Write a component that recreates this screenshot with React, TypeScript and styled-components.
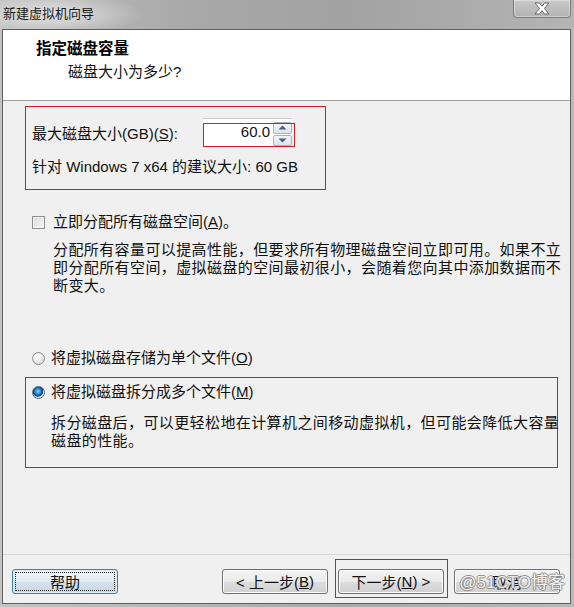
import styled, { createGlobalStyle } from "styled-components";

const GlobalStyle = createGlobalStyle`
  html, body {
    margin: 0;
    padding: 0;
    background: #b9b9b9;
  }
  body {
    font-family: "Liberation Sans", "Noto Sans CJK SC", sans-serif;
    color: #111;
  }
`;

export default function App() {
  return (
    <Window>
      <GlobalStyle />
      <TitleBar>
        <TitleText>新建虚拟机向导</TitleText>
        <CloseButton>
          <svg width="20" height="13" viewBox="0 0 20 13">
            <path
              d="M3 1 H7.5 L10 4.3 L12.5 1 H17 L12.4 6.5 L17 12 H12.5 L10 8.7 L7.5 12 H3 L7.6 6.5 Z"
              fill="#fff"
              stroke="#6a6a6a"
              strokeWidth="1"
              strokeLinejoin="round"
            />
          </svg>
        </CloseButton>
      </TitleBar>
      <Client>
        <Header>
          <HeaderTitle>指定磁盘容量</HeaderTitle>
          <HeaderSub>磁盘大小为多少?</HeaderSub>
        </Header>
        <Body>
          <MarkedBox>
            <SizeRow>
              <SizeLabel>
                最大磁盘大小(GB)(<u>S</u>):
              </SizeLabel>
              <SpinBox>
                <SpinValue>60.0</SpinValue>
                <SpinButtons>
                  <SpinButton>
                    <svg width="9" height="5" viewBox="0 0 9 5">
                      <path d="M0.5 4.5 L4.5 0.5 L8.5 4.5 Z" fill="#4d5b86" />
                    </svg>
                  </SpinButton>
                  <SpinButton>
                    <svg width="9" height="5" viewBox="0 0 9 5">
                      <path d="M0.5 0.5 L4.5 4.5 L8.5 0.5 Z" fill="#4d5b86" />
                    </svg>
                  </SpinButton>
                </SpinButtons>
                <Mark $top={4} $right={-3} $bottom={0} $left={0} />
              </SpinBox>
            </SizeRow>
            <Line>针对 Windows 7 x64 的建议大小: 60 GB</Line>
          </MarkedBox>

          <OptionRow $top={23} $left={7} $gap={8}>
            <CheckBox />
            <span>
              立即分配所有磁盘空间(<u>A</u>)。
            </span>
          </OptionRow>
          <Desc $top={10} $left={28}>
            <span>分配所有容量可以提高性能，但要求所有物理磁盘空间立即可用。如果不立</span>
            <span>即分配所有空间，虚拟磁盘的空间最初很小，会随着您向其中添加数据而不</span>
            <span>断变大。</span>
          </Desc>

          <OptionRow $top={54} $left={7} $gap={6}>
            <Radio />
            <span>
              将虚拟磁盘存储为单个文件(<u>O</u>)
            </span>
          </OptionRow>

          <SplitBox>
            <OptionRow $top={0} $left={6} $gap={6}>
              <Radio $checked />
              <span>
                将虚拟磁盘拆分成多个文件(<u>M</u>)
              </span>
            </OptionRow>
            <Desc $top={13} $left={25}>
              <span>拆分磁盘后，可以更轻松地在计算机之间移动虚拟机，但可能会降低大容量</span>
              <span>磁盘的性能。</span>
            </Desc>
          </SplitBox>
        </Body>
        <Footer>
          <Button $focused>
            <FocusRing />
            帮助
          </Button>
          <Spacer />
          <Button>
            &lt; 上一步(<u>B</u>)
          </Button>
          <NextWrap>
            <Button>
              下一步(<u>N</u>) &gt;
            </Button>
            <Mark $top={-10} $right={-4} $bottom={-4} $left={-3} />
          </NextWrap>
          <Button>取消</Button>
        </Footer>
      </Client>
      <Watermark>@51CTO博客</Watermark>
    </Window>
  );
}

const Window = styled.div`
  position: relative;
  width: 574px;
  height: 607px;
  display: flex;
  flex-direction: column;
  background: linear-gradient(90deg, #c3c3c3 0%, #b2b2b2 40%, #aaaaaa 60%, #b9b9b9 100%);
  overflow: hidden;
`;

const TitleBar = styled.div`
  height: 29px;
  display: flex;
  align-items: flex-start;
  background:
    radial-gradient(ellipse 95px 22px at 48px 14px, rgba(235, 235, 235, 0.85), rgba(235, 235, 235, 0) 100%),
    linear-gradient(90deg, #bdbdbd 0%, #a8a8a8 35%, #a2a2a2 60%, #b4b4b4 100%);
`;

const TitleText = styled.div`
  padding-left: 3px;
  line-height: 27px;
  font-size: 13px;
  color: #1a1a1a;
`;

const CloseButton = styled.div`
  margin-left: auto;
  margin-right: 3px;
  width: 58px;
  height: 18px;
  box-sizing: border-box;
  border: 1px solid #7d7d7d;
  border-top: none;
  border-radius: 0 0 4px 4px;
  background: linear-gradient(#c9c9c9, #bdbdbd 50%, #b3b3b3);
  box-shadow: inset 0 0 0 1px rgba(255, 255, 255, 0.35);
  display: flex;
  align-items: center;
  justify-content: center;
`;

const Client = styled.div`
  flex: 1;
  margin: 0 3px 3px 2px;
  border: 1px solid #5e5e5e;
  background: #f0f0f0;
  display: flex;
  flex-direction: column;
`;

const Header = styled.div`
  height: 71px;
  box-sizing: border-box;
  background: #fff;
  border-bottom: 1px solid #a0a0a0;
  padding: 10px 0 0 33px;
`;

const HeaderTitle = styled.div`
  font-size: 15.5px;
  line-height: 18px;
  font-weight: bold;
  color: #000;
`;

const HeaderSub = styled.div`
  margin: 5px 0 0 32px;
  font-size: 15px;
  line-height: 18px;
`;

const Body = styled.div`
  flex: 1;
  padding: 5px 0 0 22px;
  font-size: 15px;
  line-height: 18px;
  display: flex;
  flex-direction: column;
  align-items: flex-start;
`;

const MarkedBox = styled.div`
  width: 301px;
  height: 84px;
  box-sizing: border-box;
  border: 1px solid #d41c26;
  padding: 11px 0 0 6px;
`;

const SizeRow = styled.div`
  display: flex;
  align-items: center;
  height: 29px;
`;

const SizeLabel = styled.div`
  width: 171px;
  padding-top: 3px;
`;

const SpinBox = styled.div`
  position: relative;
  width: 89px;
  height: 29px;
  box-sizing: border-box;
  border-top: 1px solid #c8c8c8;
  display: flex;
  align-items: stretch;
  background: #fff;
`;

const SpinValue = styled.div`
  flex: 1;
  text-align: right;
  padding: 4px 3px 0 0;
  font-size: 15px;
  line-height: 18px;
`;

const SpinButtons = styled.div`
  width: 19px;
  padding: 3px 0 1px;
  display: flex;
  flex-direction: column;
  gap: 1px;
`;

const SpinButton = styled.div`
  flex: 1;
  border: 1px solid #a9b1c2;
  border-radius: 2px;
  background: linear-gradient(#f4f6fa, #dde3ec);
  display: flex;
  align-items: center;
  justify-content: center;
`;

const Mark = styled.div<{ $top: number; $right: number; $bottom: number; $left: number }>`
  position: absolute;
  top: ${(p) => p.$top}px;
  right: ${(p) => p.$right}px;
  bottom: ${(p) => p.$bottom}px;
  left: ${(p) => p.$left}px;
  border: 1px solid #d41c26;
  pointer-events: none;
`;

const Line = styled.div`
  margin-top: 11px;
`;

const OptionRow = styled.div<{ $top: number; $left: number; $gap: number }>`
  margin: ${(p) => p.$top}px 0 0 ${(p) => p.$left}px;
  display: flex;
  align-items: center;
  gap: ${(p) => p.$gap}px;
`;

const CheckBox = styled.div`
  width: 13px;
  height: 13px;
  box-sizing: border-box;
  border: 1px solid #8e8f8f;
  background: linear-gradient(135deg, #dcdcdc, #f6f6f6);
  box-shadow: inset 0 0 0 1px #f4f4f4;
`;

const Radio = styled.div<{ $checked?: boolean }>`
  width: 13px;
  height: 13px;
  box-sizing: border-box;
  border-radius: 50%;
  border: 1px solid ${(p) => (p.$checked ? "#4d6278" : "#8e8f8f")};
  background: ${(p) =>
    p.$checked
      ? "radial-gradient(circle at 45% 40%, #8fd2ff 0%, #1f7fc4 35%, #0d3e66 55%, #e9eef2 62%, #cfd5db 100%)"
      : "radial-gradient(circle at 40% 35%, #ffffff 0%, #e6e6e6 55%, #c7c7c7 100%)"};
`;

const Desc = styled.div<{ $top: number; $left: number }>`
  margin: ${(p) => p.$top}px 0 0 ${(p) => p.$left}px;
  line-height: 18px;
  letter-spacing: 0.4px;
  display: flex;
  flex-direction: column;
  white-space: nowrap;
`;

const SplitBox = styled.div`
  margin-top: 10px;
  width: 533px;
  height: 91px;
  box-sizing: border-box;
  border: 1px solid #d41c26;
  padding-top: 5px;
`;

const Footer = styled.div`
  border-top: 1px solid #d8d8d8;
  padding: 14px 10px 9px 9px;
  display: flex;
  align-items: center;
  gap: 10px;
`;

const Spacer = styled.div`
  flex: 1;
`;

const NextWrap = styled.div`
  position: relative;
  display: flex;
`;

const Button = styled.div<{ $focused?: boolean }>`
  position: relative;
  width: 106px;
  height: 25px;
  box-sizing: border-box;
  border-radius: 3px;
  border: 1px solid ${(p) => (p.$focused ? "#3c7fb1" : "#707070")};
  background: ${(p) =>
    p.$focused
      ? "linear-gradient(#eef4f9 0%, #e2ebf3 50%, #d2e0eb 51%, #c9d9e6 100%)"
      : "linear-gradient(#f3f3f3 0%, #ebebeb 50%, #dddddd 51%, #d0d0d0 100%)"};
  box-shadow: inset 0 0 0 1px ${(p) => (p.$focused ? "#d7ebf8" : "#fcfcfc")};
  display: flex;
  align-items: center;
  justify-content: center;
  font-size: 15px;
  color: #111;
`;

const FocusRing = styled.div`
  position: absolute;
  inset: 2px;
  border: 1px dotted #222;
  border-radius: 1px;
`;

const Watermark = styled.div`
  position: absolute;
  right: 9px;
  bottom: 14px;
  font-size: 17px;
  line-height: 20px;
  color: #f4f4f4;
  text-shadow:
    1px 0 0 #8a8a8a,
    -1px 0 0 #8a8a8a,
    0 1px 0 #8a8a8a,
    0 -1px 0 #8a8a8a;
  opacity: 0.9;
`;
